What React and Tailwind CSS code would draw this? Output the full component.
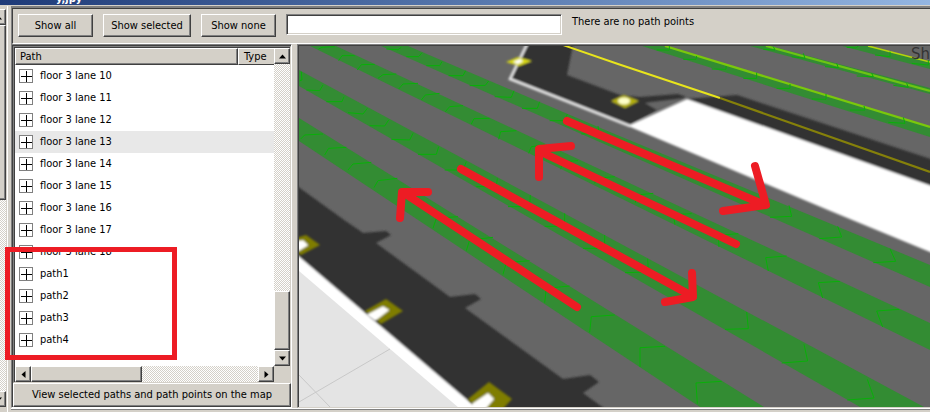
const rows = [
  'floor 3 lane 10',
  'floor 3 lane 11',
  'floor 3 lane 12',
  'floor 3 lane 13',
  'floor 3 lane 14',
  'floor 3 lane 15',
  'floor 3 lane 16',
  'floor 3 lane 17',
  'floor 3 lane 18',
  'path1',
  'path2',
  'path3',
  'path4',
];

const raised =
  'border border-t-white border-l-white border-r-[#404040] border-b-[#404040] bg-[#d4d0c8] shadow-[inset_-1px_-1px_0_#808080]';
const track =
  'bg-[repeating-conic-gradient(#d4d0c8_0_25%,#fff_0_50%)] bg-[length:2px_2px]';

function Arrow({ dir }) {
  const d = {
    up: 'M0 5.5 L3.5 1.5 L7 5.5Z',
    down: 'M0 1.5 L3.5 5.5 L7 1.5Z',
    left: 'M5.5 0 L1.5 3.5 L5.5 7Z',
    right: 'M1.5 0 L5.5 3.5 L1.5 7Z',
  }[dir];
  return (
    <svg width="7" height="7" viewBox="0 0 7 7" aria-hidden="true">
      <path d={d} fill="#000" />
    </svg>
  );
}

function ScrollButton({ dir }) {
  return (
    <button
      type="button"
      aria-label={`Scroll ${dir}`}
      className={`flex h-4 w-4 shrink-0 items-center justify-center ${raised}`}
    >
      <Arrow dir={dir} />
    </button>
  );
}

function PushButton({ children, className }) {
  return (
    <button type="button" className={`flex items-center justify-center ${raised} ${className}`}>
      {children}
    </button>
  );
}

/* Direction marks along the lanes: tail, tip, tail */
const marks = [
  // lowest lane, heading up-left
  [75, 282, 20, 285, 8, 297], [145, 322, 92, 325, 80, 345], [220, 367, 165, 372, 150, 390],
  [298, 415, 240, 422, 228, 443], [480, 530, 415, 535, 405, 565], [585, 592, 515, 600, 505, 632],
  [695, 662, 625, 668, 615, 703], [815, 738, 745, 745, 740, 788], [950, 825, 880, 830, 875, 877],
  [1101, 919, 1026, 923, 1026, 981], [1271, 1024, 1194, 1029, 1198, 1091],
  // second lane, heading down-right
  [10, 95, 12, 120, 5, 122], [75, 135, 65, 152, 25, 150], [138, 170, 132, 185, 85, 185],
  [208, 205, 195, 222, 150, 218], [272, 240, 260, 258, 215, 257], [345, 280, 335, 300, 280, 298],
  [422, 320, 415, 343, 360, 343], [505, 365, 495, 390, 440, 390], [598, 415, 595, 440, 535, 440],
  [697, 465, 695, 500, 630, 500], [800, 520, 800, 559, 740, 559], [920, 585, 920, 625, 855, 625],
  [1049, 656, 1051, 696, 981, 698], [1346, 816, 1351, 866, 1281, 868],
  [1518, 913, 1529, 963, 1451, 969], [1708, 1018, 1728, 1074, 1648, 1080],
  // third lane, heading up-left
  [110, 20, 72, 22, 62, 27], [170, 47, 132, 47, 122, 62], [230, 73, 190, 74, 178, 90],
  [295, 102, 255, 104, 240, 115], [360, 130, 315, 132, 302, 147], [425, 160, 382, 165, 370, 180],
  [495, 197, 455, 200, 442, 215], [575, 235, 528, 236, 520, 252], [655, 272, 608, 275, 602, 298],
  [740, 315, 700, 320, 692, 340], [840, 362, 793, 365, 788, 388], [950, 410, 895, 415, 890, 430],
  [1066, 460, 1016, 465, 1012, 488], [1181, 521, 1126, 524, 1131, 554], [1321, 581, 1261, 586, 1263, 621],
  [1466, 648, 1403, 653, 1411, 693], [1626, 724, 1561, 728, 1574, 774], [1804, 808, 1736, 813, 1754, 861],
  // fourth lane, heading down-right
  [310, 22, 300, 29, 265, 27], [372, 38, 362, 50, 325, 50], [432, 65, 425, 77, 385, 77],
  [503, 92, 495, 107, 452, 107], [572, 123, 562, 136, 515, 137], [648, 152, 640, 172, 590, 170],
  [725, 185, 718, 205, 672, 205], [808, 222, 800, 242, 755, 242], [900, 258, 903, 280, 850, 282],
  [1473, 496, 1481, 529, 1416, 532], [1619, 559, 1631, 591, 1564, 596], [1776, 626, 1793, 664, 1726, 668],
  // upper lanes
  [1114, 17, 1114, 30, 1076, 30], [1196, 48, 1194, 58, 1156, 58], [1284, 78, 1284, 88, 1241, 87],
  [1376, 98, 1376, 115, 1336, 115], [1476, 132, 1476, 145, 1436, 145], [1584, 162, 1584, 178, 1541, 177],
  [1698, 198, 1701, 210, 1656, 210], [1816, 232, 1821, 250, 1771, 247],
  [1426, 20, 1431, 30, 1396, 28], [1516, 40, 1521, 55, 1481, 50], [1616, 70, 1621, 83, 1581, 80],
  [1721, 100, 1726, 110, 1676, 108], [1826, 130, 1831, 142, 1786, 136],
  [1681, 18, 1675, 24, 1646, 22], [1776, 35, 1776, 50, 1731, 45], [1891, 60, 1891, 75, 1841, 70],
];

const markPath = marks
  .map(([a, b, c, d, e, f]) => `M${a} ${b}L${c} ${d}L${e} ${f}`)
  .join('');

function Diamond({ outer, inner }) {
  return (
    <g filter="url(#soft)">
      <polygon points={outer} fill="#7f7d05" />
      <polygon points={inner} fill="#fff" stroke="#fff" strokeWidth="1.5" />
    </g>
  );
}

function FloorMap() {
  return (
    <svg
      className="absolute inset-0 h-full w-full"
      viewBox="299 46 631 361"
      preserveAspectRatio="xMinYMin slice"
      role="img"
      aria-label="Floor map with lane directions"
    >
      <defs>
        <filter id="soft" x="-20%" y="-20%" width="140%" height="140%">
          <feGaussianBlur stdDeviation="0.9" />
        </filter>
      </defs>
      <rect x="299" y="46" width="631" height="361" fill="#666" />

      {/* lower-left wall and outside ground */}
      <g filter="url(#soft)">
        <path
          d="M290 181L358 230L345 220L363 233L386 231L391 235L376 243L450 297L475 294L481 299L465 308L563 379L590 375L599 382L583 393L612 414H290Z"
          fill="#333"
        />
        <path d="M290 249L479 410L470 420H280Z" fill="#fff" />
      </g>
      <path d="M299 271L459 408H299Z" fill="#e4e4e4" />
      <path d="M299 402L390 349M299 375L330 407" stroke="#c8c8c8" fill="none" />
      <Diamond outer="296,238 306,235 320,245 301,255 296,252" inner="296,242 303,241 307,245 299,250 296,250" />
      <Diamond outer="365,311 386,299 403,311 381,324" inner="368,315 383,307 388,310 375,320" />
      <Diamond outer="468,399 489,382 512,399 500,412 480,412" inner="473,404 488,394 493,399 482,412 470,412" />

      {/* upper building */}
      <g filter="url(#soft)">
        <path d="M528 40H574L567 75L620 95L640 97L678 94L686 97L657 110L628 126L510 79Z" fill="#333" />
        <path d="M645 103L686 98L657 110Z" fill="#666" />
        <path d="M529 40L510 79L630 126" fill="none" stroke="#e6e6e6" strokeWidth="2.6" />
        <path d="M685 99L737 95L940 162V192Z" fill="#333" />
        <path d="M628 126L687 99L940 189V256L828 210Z" fill="#fff" />
        <path d="M506 62L518 57L532 61L519 66Z" fill="#d8d816" />
        <path d="M513 62L520 59L523 61L518 64Z" fill="#fff" />
        <path d="M611 101L624 95L639 101L625 108Z" fill="#b4b00c" />
        <ellipse cx="624" cy="101" rx="6" ry="3.4" fill="#ffffc8" />
      </g>
      <path d="M563 45L618 64L720 98" fill="none" stroke="#e8e41c" strokeWidth="1.9" />
      <path d="M720 98L930 172" fill="none" stroke="#85800a" strokeWidth="2.2" />

      {/* lanes */}
      <g fill="#338c33">
        <path d="M299 118L764 407H700L299 141Z" />
        <path d="M299 70L610 238L924 407H860L610 264L299 86Z" />
        <path d="M336 46L610 174L930 323V350L310 46Z" />
        <path d="M408 46L610 132L930 265V287L381 46Z" />
        <path d="M663 46L930 127V137L642 46Z" />
        <path d="M770 46L930 88V94L750 46Z" />
        <path d="M868 46L930 62V69L842 46Z" />
      </g>
      <path d="M665 46L930 127" stroke="#7ac80c" strokeWidth="2.2" />
      <path d="M766 46L930 91" stroke="#6cc414" strokeWidth="2.2" />
      <path d="M868 46L930 62" stroke="#b4d40c" strokeWidth="1.6" />
      <g transform="translate(298 40) scale(0.33333)">
        <path d={markPath} fill="none" stroke="#08b008" strokeWidth="3" />
      </g>

      <text x="911" y="59" fontSize="15" fill="#333" fontFamily="DejaVu Sans, sans-serif">
        Sh
      </text>

      {/* hand-drawn direction arrows */}
      <g fill="none" stroke="#ed1c24" strokeWidth="8" strokeLinecap="round" strokeLinejoin="round">
        <path d="M567 121L765 205M755 166L766 205L723 211" />
        <path d="M736 244L541 152M571 146L539 149V177" />
        <path d="M461 169L692 296M692 273L693 297L665 302" />
        <path d="M577 307L404 193M428 192L402 192L400 218" />
      </g>
    </svg>
  );
}

export default function App() {
  return (
    <div className="relative flex h-screen flex-col overflow-hidden bg-[#d4d0c8] font-['DejaVu_Sans_Condensed','DejaVu_Sans',sans-serif] text-[11px] leading-4 text-black">
      <header className="flex h-[5px] shrink-0 items-end overflow-hidden bg-linear-to-r from-[#1e3a78] to-[#94b6e2] pl-[56px]">
        <span className="font-bold leading-3 text-white">y,jpy</span>
      </header>

      <div className="flex min-h-0 flex-1 pt-px">
        {/* neighbouring pane, mostly off screen */}
        <aside className="flex w-[7px] shrink-0 justify-end overflow-hidden border-r border-[#d4d0c8] pt-[3px] pb-[5px]">
          <div className={`flex w-4 shrink-0 flex-col ${track}`}>
            <ScrollButton dir="up" />
            <div className={`h-[175px] ${raised}`} />
            <div className="flex-1" />
            <ScrollButton dir="down" />
          </div>
        </aside>
        <div className="w-1 shrink-0 border-l border-white" />

        <div className="flex min-w-0 flex-1 flex-col">
          <div className="flex items-start border-t-2 border-l border-[#808080]">
            <div className="flex h-[36px] flex-1 items-start gap-[10px] border-t border-l border-b border-b-white border-t-[#404040] border-l-[#404040] pt-[5px] pl-[5px]">
              <PushButton className="h-[23px] w-[75px]">Show all</PushButton>
              <PushButton className="h-[23px] w-[88px]">Show selected</PushButton>
              <PushButton className="h-[23px] w-[75px]">Show none</PushButton>
              <input
                type="text"
                aria-label="Path filter"
                className="h-[21px] w-[276px] border border-t-[#808080] border-l-[#808080] border-r-white border-b-white bg-white px-1 shadow-[inset_1px_1px_0_#404040,inset_-1px_-1px_0_#d4d0c8] outline-none"
              />
              <p>There are no path points</p>
            </div>
          </div>

          <main className="flex min-h-0 flex-1">
            <section className="flex w-[281px] shrink-0 flex-col border border-t-[#808080] border-l-[#808080] border-r-white border-b-white">
              <div className="flex min-h-0 flex-1 flex-col border-t border-l border-[#404040]">
                <div className="flex min-h-0 flex-1 flex-col border border-t-[#808080] border-l-[#808080] border-r-[#d4d0c8] border-b-[#d4d0c8]">
                  <div className="flex min-h-0 flex-1 border-t border-l border-[#404040]">
                    <div className="min-w-0 flex-1 overflow-hidden bg-white">
                      <table className="w-full table-fixed border-separate border-spacing-0 text-left">
                        <thead>
                          <tr className="h-[17px]">
                            <th className={`p-0 pl-[4px] font-normal leading-[15px] ${raised}`}>Path</th>
                            <th className="w-[36px] border-t border-l border-b border-t-white border-l-white border-b-[#404040] bg-[#d4d0c8] p-0 pl-[5px] font-normal leading-[15px]">
                              Type
                            </th>
                          </tr>
                        </thead>
                        <tbody>
                          {rows.map((name, i) => (
                            <tr key={name} className={i === 3 ? 'bg-[#e8e8e8]' : 'bg-white'}>
                              <td className="p-0" colSpan={2}>
                                <div className="flex h-[22px] items-center gap-[7px] pl-1">
                                  <button
                                    type="button"
                                    aria-label={`Expand ${name}`}
                                    className="h-[14px] w-[14px] shrink-0 border border-[#808080] bg-white"
                                  >
                                    <svg width="12" height="12" viewBox="0 0 12 12" aria-hidden="true">
                                      <path d="M1 6.5H12M6.5 1V12" stroke="#000" />
                                    </svg>
                                  </button>
                                  <span className="leading-[18px]">{name}</span>
                                </div>
                              </td>
                            </tr>
                          ))}
                        </tbody>
                      </table>
                    </div>
                    <div className={`flex w-4 shrink-0 flex-col ${track}`}>
                      <ScrollButton dir="up" />
                      <div className="flex-1" />
                      <div className={`h-[59px] ${raised}`} />
                      <ScrollButton dir="down" />
                    </div>
                  </div>
                  <div className="flex border-l border-[#404040]">
                    <div className={`flex min-w-0 flex-1 ${track}`}>
                      <ScrollButton dir="left" />
                      <div className={`w-[111px] ${raised}`} />
                      <div className="flex-1" />
                      <ScrollButton dir="right" />
                    </div>
                    <div className="w-4 shrink-0" />
                  </div>
                </div>
                <PushButton className="h-[24px] w-full">
                  View selected paths and path points on the map
                </PushButton>
              </div>
            </section>
            <section className="ml-[5px] flex min-w-0 flex-1 border-t border-b border-l border-t-[#808080] border-l-[#808080] border-b-[#d4d0c8]">
              <div className="relative flex-1 overflow-hidden border-t border-l border-[#404040]">
                <FloorMap />
              </div>
            </section>
          </main>
          <footer className="h-[4px] shrink-0 border-t border-white">
            <div className="h-px bg-[#808080]" />
          </footer>
        </div>
      </div>

      {/* highlight round the listed paths */}
      <div className="pointer-events-none absolute top-[247px] left-[5px] h-[113px] w-[172px] border-5 border-[#ed1c24]" />
    </div>
  );
}
